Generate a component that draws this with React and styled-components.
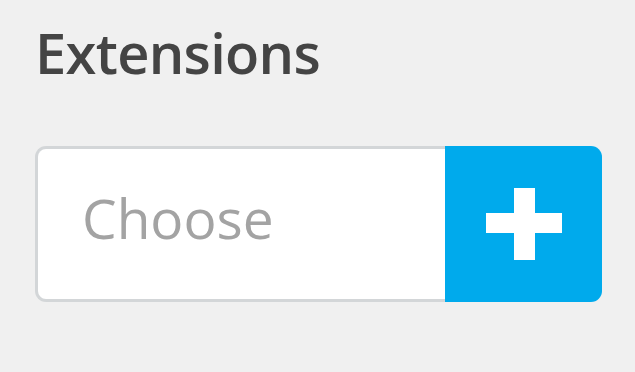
import React from "react";
import styled, { createGlobalStyle } from "styled-components";

const Global = createGlobalStyle`
  html, body { margin: 0; padding: 0; background: #f0f0f0; }
  body { font-family: "Open Sans", "Noto Sans", sans-serif; }
`;

const Panel = styled.div`
  width: 635px;
  height: 372px;
  box-sizing: border-box;
  padding: 14px 33px 0 35px;
  display: flex;
  flex-direction: column;
  gap: 56px;
`;

const Title = styled.h2`
  margin: 0;
  font-family: "Open Sans", sans-serif;
  font-weight: 600;
  font-size: 56px;
  line-height: 76px;
  color: #444;
  letter-spacing: -0.7px;
`;

const Group = styled.div`
  display: flex;
  height: 156px;
  width: 567px;
`;

const Input = styled.input`
  flex: 1;
  min-width: 0;
  box-sizing: border-box;
  border: 3px solid #d3d6d8;
  border-right: none;
  border-radius: 11px 0 0 11px;
  background: #fff;
  padding: 0 0 14px 44px;
  font-family: "Open Sans", sans-serif;
  font-size: 55px;
  color: #444;
  outline: none;
  &::placeholder { color: #a3a3a3; }
`;

const AddButton = styled.button`
  width: 157px;
  border: none;
  border-radius: 0 11px 11px 0;
  background: #00aaec;
  display: flex;
  align-items: center;
  justify-content: center;
  padding: 0;
  cursor: pointer;
`;

const Plus = () => (
  <svg width="76" height="72" viewBox="0 0 76 72">
    <rect x="28" y="0" width="21" height="72" fill="#fff" />
    <rect x="0" y="25" width="76" height="20" fill="#fff" />
  </svg>
);

export default function App() {
  return (
    <>
      <Global />
      <Panel>
        <Title>Extensions</Title>
        <Group>
          <Input placeholder="Choose" />
          <AddButton aria-label="Add">
            <Plus />
          </AddButton>
        </Group>
      </Panel>
    </>
  );
}
